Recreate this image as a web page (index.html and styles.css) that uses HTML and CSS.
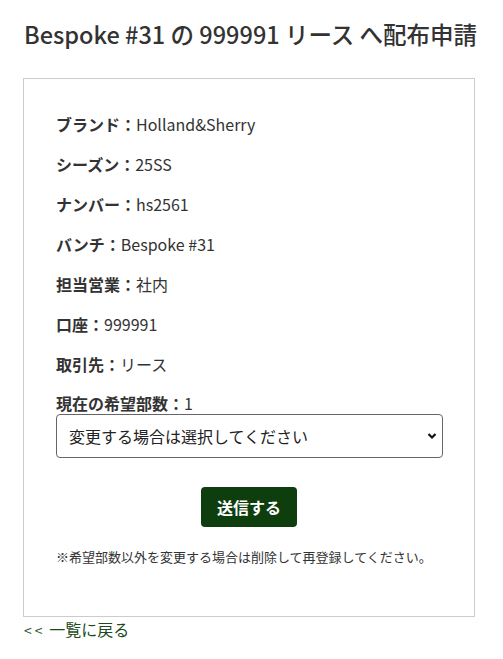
FILE: index.html
```html
<!DOCTYPE html>
<html lang="ja">
<head>
<meta charset="utf-8">
<link rel="stylesheet" href="styles.css">
</head>
<body>
<div class="page">
  <h1 class="title">Bespoke #31 の 999991 リース へ配布申請</h1>
  <div class="card">
    <p class="row"><span class="label">ブランド：</span>Holland&amp;Sherry</p>
    <p class="row"><span class="label">シーズン：</span>25SS</p>
    <p class="row"><span class="label">ナンバー：</span>hs2561</p>
    <p class="row"><span class="label">バンチ：</span>Bespoke #31</p>
    <p class="row"><span class="label">担当営業：</span>社内</p>
    <p class="row"><span class="label">口座：</span>999991</p>
    <p class="row"><span class="label">取引先：</span>リース</p>
    <p class="row last"><span class="label">現在の希望部数：</span>1</p>
    <div class="select-wrap">
      <select class="select">
        <option>変更する場合は選択してください</option>
      </select>
      <svg class="chev" width="10" height="8" viewBox="0 0 10 8"><path d="M1.5 2 L5 5.5 L8.5 2" fill="none" stroke="#111" stroke-width="2.2"/></svg>
    </div>
    <div class="actions"><button class="submit">送信する</button></div>
    <p class="note">※希望部数以外を変更する場合は削除して再登録してください。</p>
  </div>
  <a class="back" href="#"><span class="arrows">&lt;&lt;</span> 一覧に戻る</a>
</div>
</body>
</html>
```
FILE: styles.css
```css
* { box-sizing: border-box; }
body {
  margin: 0;
  font-family: "Noto Sans CJK JP", "Noto Sans", sans-serif;
  color: #333;
  background: #fff;
}
.page {
  padding: 0 28px 0 23px;
}
.title {
  margin: 0;
  padding-top: 16px;
  height: 78px;
  font-size: 23.5px;
  font-weight: 500;
  line-height: 36px;
  color: #333;
  padding-left: 1px;
  white-space: nowrap;
}
.card {
  border: 1px solid #ccc;
  padding: 33px 32px 0 32px;
  height: 539px;
}
.row {
  margin: 0 0 16px 0;
  font-size: 16px;
  line-height: 24px;
  color: #333;
}
.row.last { margin-bottom: 0; line-height: 22px; }
.label { font-weight: 700; }
.select-wrap {
  position: relative;
  width: 387px;
}
.select {
  display: block;
  width: 100%;
  height: 44px;
  appearance: none;
  -webkit-appearance: none;
  border: 1px solid #666;
  border-radius: 4px;
  background: #fff;
  padding: 0 12px;
  font-family: "Noto Sans CJK JP", sans-serif;
  font-size: 16px;
  color: #222;
}
.chev {
  position: absolute;
  right: 6px;
  top: 18px;
}
.actions {
  display: flex;
  justify-content: center;
  padding-top: 29px;
}
.submit {
  width: 96px;
  height: 40px;
  border: none;
  border-radius: 4px;
  background: #0e3d0e;
  color: #fff;
  font-family: "Noto Sans CJK JP", sans-serif;
  font-size: 16px;
  font-weight: 700;
}
.note {
  margin: 20px 0 0 0;
  font-size: 13px;
  line-height: 20px;
  color: #333;
}
.back {
  display: inline-block;
  padding-left: 1px;
  font-size: 16px;
  line-height: 24px;
  color: #1c4a1c;
  text-decoration: none;
}
.arrows {
  letter-spacing: 3px;
  font-size: 14px;
}
```
